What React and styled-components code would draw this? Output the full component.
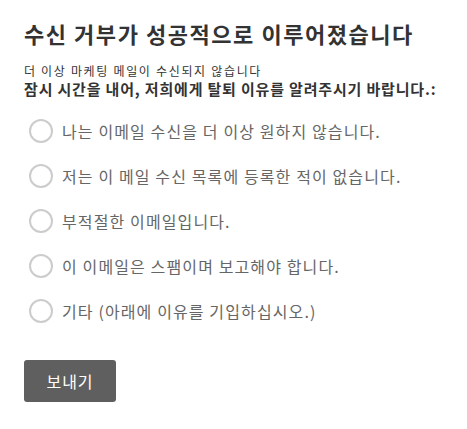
import React, { useState } from 'react';
import styled, { createGlobalStyle } from 'styled-components';

const GlobalStyle = createGlobalStyle`
  body {
    margin: 0;
    background: #fff;
    font-family: "Noto Sans CJK KR", "Noto Sans", sans-serif;
  }
`;

const Page = styled.div`
  padding: 17px 24px;
  color: #333;
`;

const Title = styled.h1`
  margin: 0;
  font-size: 22px;
  font-weight: 700;
  line-height: 32px;
  letter-spacing: 0.07em;
  color: #333;
`;

const Note = styled.p`
  margin: 15px 0 0;
  font-size: 12px;
  line-height: 14px;
  letter-spacing: 0.14em;
  color: #333;
`;

const Ask = styled.p`
  margin: 1px 0 0;
  font-size: 15px;
  font-weight: 700;
  line-height: 20px;
  letter-spacing: 0.055em;
  color: #333;
`;

const Options = styled.div`
  display: flex;
  flex-direction: column;
  gap: 21px;
  margin-top: 20px;
  padding-left: 5px;
`;

const Option = styled.label`
  display: flex;
  align-items: center;
  gap: 9px;
  cursor: pointer;
  font-size: 16px;
  line-height: 24px;
  letter-spacing: 0.07em;
  color: #666;
`;

const Circle = styled.span`
  width: 20px;
  height: 20px;
  border-radius: 50%;
  border: 2px solid #ccc;
  flex-shrink: 0;
  box-sizing: content-box;
  display: flex;
  align-items: center;
  justify-content: center;

  &::after {
    content: '';
    width: 10px;
    height: 10px;
    border-radius: 50%;
    background: ${p => (p.$on ? '#5f5f5f' : 'transparent')};
  }
`;

const SendButton = styled.button`
  margin-top: 37px;
  width: 92px;
  height: 42px;
  border: none;
  border-radius: 3px;
  background: #5f5f5f;
  color: #fff;
  font-family: inherit;
  font-size: 16px;
  letter-spacing: 0.06em;
  cursor: pointer;
`;

const reasons = [
  '나는 이메일 수신을 더 이상 원하지 않습니다.',
  '저는 이 메일 수신 목록에 등록한 적이 없습니다.',
  '부적절한 이메일입니다.',
  '이 이메일은 스팸이며 보고해야 합니다.',
  '기타 (아래에 이유를 기입하십시오.)',
];

const App = () => {
  const [picked, setPicked] = useState(null);

  return (
    <Page>
      <GlobalStyle />
      <Title>수신 거부가 성공적으로 이루어졌습니다</Title>
      <Note>더 이상 마케팅 메일이 수신되지 않습니다</Note>
      <Ask>잠시 시간을 내어, 저희에게 탈퇴 이유를 알려주시기 바랍니다.:</Ask>
      <Options>
        {reasons.map((r, i) => (
          <Option key={i} onClick={() => setPicked(i)}>
            <Circle $on={picked === i} />
            {r}
          </Option>
        ))}
      </Options>
      <SendButton>보내기</SendButton>
    </Page>
  );
};

export default App;
